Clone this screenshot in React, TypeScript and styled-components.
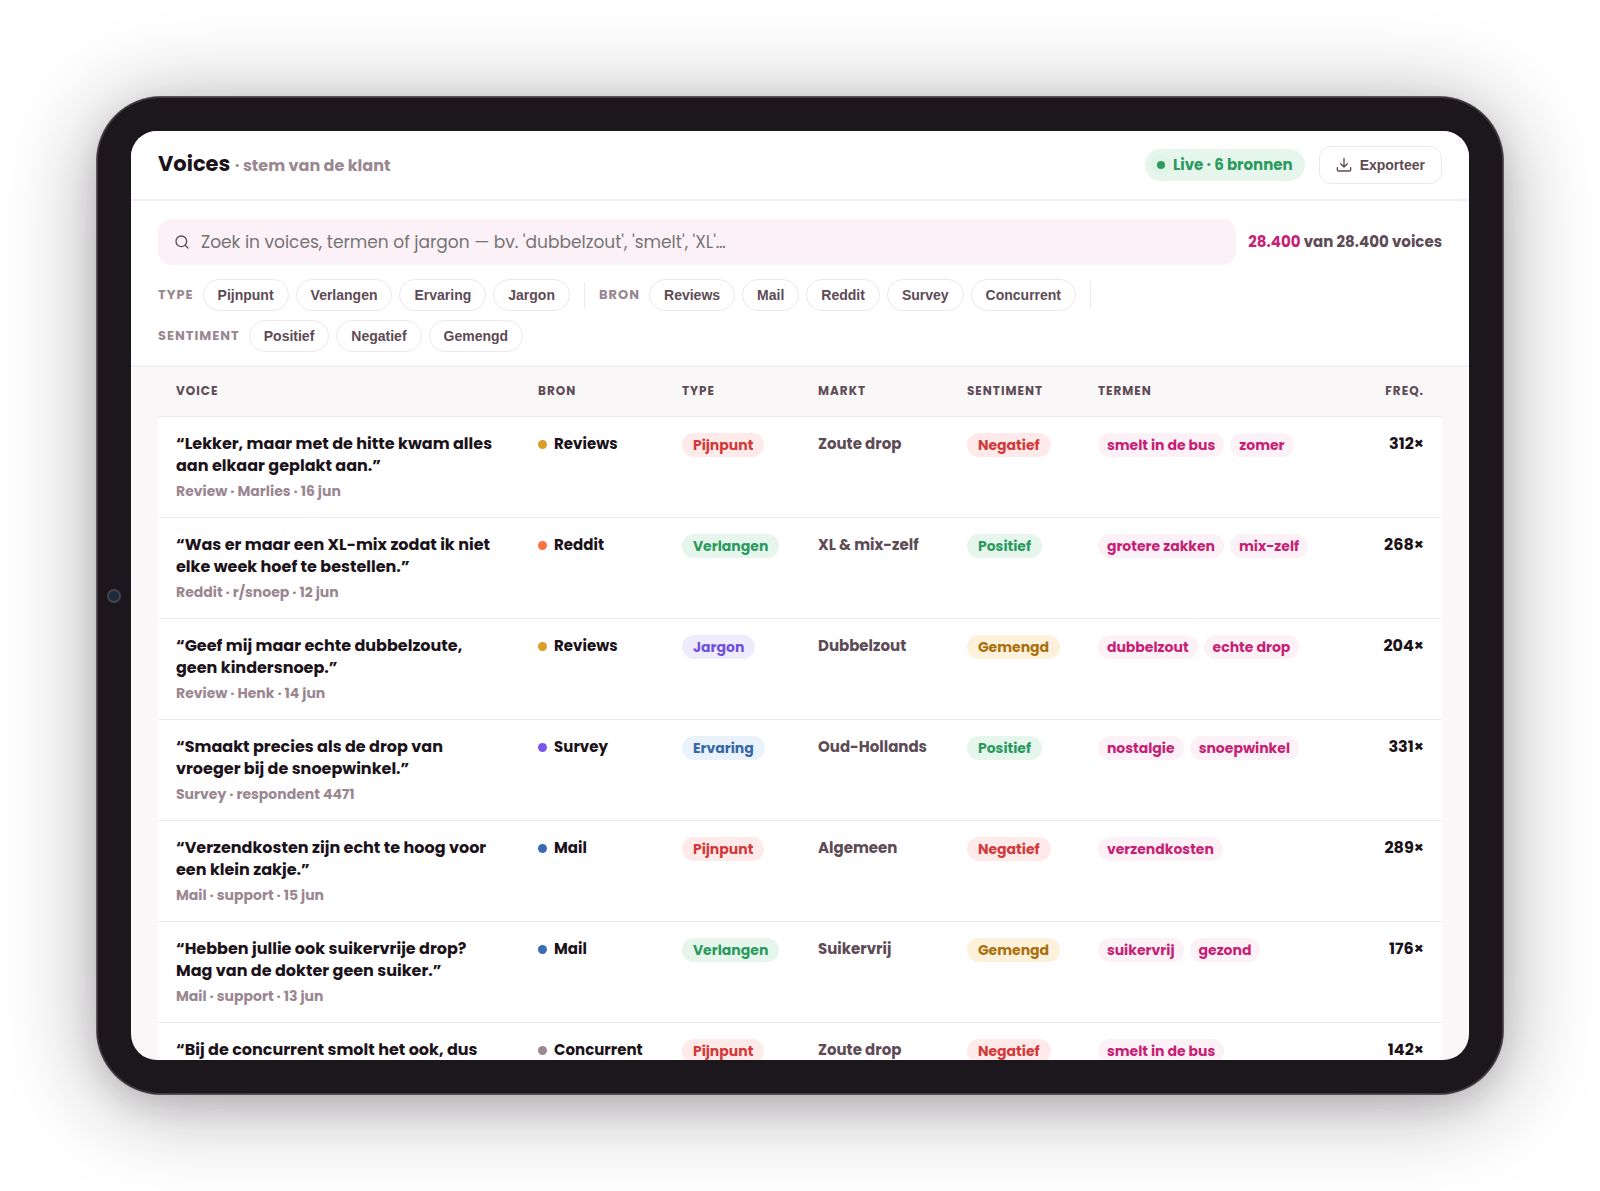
import React from "react";
import styled, { createGlobalStyle } from "styled-components";

const display = `Poppins, Inter, "Open Sans", sans-serif`;
const control = `"Liberation Sans", Arial, sans-serif`;

const GlobalStyle = createGlobalStyle`
  *, *::before, *::after { box-sizing: border-box; }
  body { margin: 0; background: #ffffff; color: #1b121a; font-family: ${display}; }
`;

const Stage = styled.main`
  display: flex;
  height: 100vh;
  min-height: 640px;
  padding: 97px;
  overflow: hidden;
`;

const Device = styled.div`
  position: relative;
  flex: 1;
  display: flex;
  min-width: 0;
  padding: 34px;
  border-radius: 64px;
  background: #1c161d;
  box-shadow: inset 0 0 0 1px #40373f, 0 0 0 1px #5c525a, 0 12px 28px rgba(28, 22, 29, 0.1), 0 10px 90px rgba(28, 22, 29, 0.38);
`;

const Camera = styled.span`
  position: absolute;
  top: 50%;
  left: 10px;
  width: 14px;
  height: 14px;
  margin-top: -7px;
  border: 2px solid #45424a;
  border-radius: 50%;
  background: #1c2b3c;
`;

const Screen = styled.div`
  flex: 1;
  display: flex;
  flex-direction: column;
  min-width: 0;
  overflow: hidden;
  border-radius: 26px;
  background: #f9f7f8;
`;

const TopBar = styled.header`
  display: flex;
  flex-shrink: 0;
  align-items: center;
  justify-content: space-between;
  padding: 15px 27px;
  border-bottom: 2px solid #f4eff2;
  background: #ffffff;
`;

const Title = styled.h1`
  margin: 0;
  font-size: 21px;
  line-height: 32px;
  font-weight: 700;
`;

const Subtitle = styled.span`
  color: #9a8792;
  font-size: 16px;
  font-weight: 700;
`;

const Actions = styled.div`
  display: flex;
  align-items: center;
  gap: 14px;
`;

const LiveBadge = styled.span`
  display: flex;
  align-items: center;
  gap: 8px;
  padding: 6px 12px;
  border-radius: 16px;
  background: #e6f6ec;
  color: #2b9a5e;
  font-size: 15px;
  line-height: 20px;
  font-weight: 700;
`;

const LiveDot = styled.span`
  width: 8px;
  height: 8px;
  border-radius: 50%;
  background: #2b9a5e;
  box-shadow: 0 0 0 6px rgba(43, 154, 94, 0.03);
`;

const ExportButton = styled.button`
  display: flex;
  align-items: center;
  gap: 8px;
  height: 38px;
  padding: 0 16px;
  border: 1px solid #f2e4eb;
  border-radius: 12px;
  background: #ffffff;
  color: #5d4b56;
  font-family: ${control};
  font-size: 14px;
  font-weight: 700;
`;

const Filters = styled.section`
  display: flex;
  flex-shrink: 0;
  flex-direction: column;
  gap: 14px;
  padding: 18px 27px 13px;
  border-bottom: 2px solid #f4eff2;
  background: #ffffff;
`;

const SearchRow = styled.div`
  display: flex;
  align-items: center;
  gap: 12px;
`;

const SearchBox = styled.label`
  flex: 1;
  display: flex;
  align-items: center;
  gap: 11px;
  height: 46px;
  padding: 0 16px;
  border-radius: 14px;
  background: #fcf1f7;
  color: #5d4b56;
`;

const SearchInput = styled.input`
  flex: 1;
  min-width: 0;
  padding: 0;
  border: 0;
  outline: 0;
  background: transparent;
  color: #1b121a;
  font-family: ${display};
  font-size: 17px;
  line-height: 24px;
  &::placeholder { color: #757575; opacity: 1; }
`;

const Count = styled.p`
  margin: 0;
  color: #5d4b56;
  font-size: 15px;
  line-height: 20px;
  font-weight: 700;
`;

const CountHit = styled.b`
  color: #c71f75;
  font-weight: 700;
`;

const ChipRow = styled.div`
  display: flex;
  flex-wrap: wrap;
  align-items: center;
  gap: 9px 14px;
`;

const ChipGroup = styled.div`
  display: flex;
  align-items: center;
  gap: 7px;
`;

const GroupLabel = styled.span`
  padding-right: 2px;
  color: #9a8792;
  font-size: 13px;
  line-height: 18px;
  font-weight: 700;
  letter-spacing: 1px;
  text-transform: uppercase;
`;

const Chip = styled.button`
  height: 32px;
  padding: 0 14px;
  border: 1px solid #f2e4eb;
  border-radius: 16px;
  background: #ffffff;
  color: #5d4b56;
  font-family: ${control};
  font-size: 14px;
  font-weight: 700;
`;

const Divider = styled.span`
  width: 1px;
  height: 26px;
  background: #f1e6ec;
`;

const TableArea = styled.div`
  flex: 1;
  min-height: 0;
  overflow: hidden;
  padding: 0 27px;
`;

const Table = styled.table`
  width: 100%;
  border-collapse: separate;
  border-spacing: 0;
  table-layout: fixed;
`;

const Col = styled.col<{ $share: number }>`
  width: ${(p) => p.$share}%;
`;

const Th = styled.th<{ $end?: boolean }>`
  padding: 15px 18px 16px;
  border-bottom: 1px solid #f3e4ea;
  color: #5d4b56;
  font-size: 12px;
  line-height: 18px;
  font-weight: 700;
  letter-spacing: 1px;
  text-align: ${(p) => (p.$end ? "right" : "left")};
  text-transform: uppercase;
`;

const Td = styled.td<{ $end?: boolean }>`
  padding: 16px 18px;
  border-bottom: 1px solid #f1e6ea;
  background: #ffffff;
  text-align: ${(p) => (p.$end ? "right" : "left")};
  vertical-align: top;
  white-space: nowrap;
`;

const Quote = styled.p`
  margin: 0 0 4px;
  font-size: 16px;
  line-height: 22px;
  font-weight: 700;
  white-space: pre;
`;

const Meta = styled.p`
  margin: 0;
  color: #9a8792;
  font-size: 14px;
  line-height: 20px;
  font-weight: 700;
`;

const Source = styled.span`
  display: flex;
  align-items: center;
  gap: 7px;
  font-size: 15px;
  line-height: 22px;
  font-weight: 700;
`;

const SourceDot = styled.span<{ $color: string }>`
  width: 9px;
  height: 9px;
  border-radius: 50%;
  background: ${(p) => p.$color};
`;

const Pill = styled.span<{ $bg: string; $fg: string }>`
  display: block;
  width: fit-content;
  padding: 0 11px;
  border-radius: 12px;
  background: ${(p) => p.$bg};
  color: ${(p) => p.$fg};
  font-size: 14px;
  line-height: 24px;
  font-weight: 700;
`;

const Market = styled.span`
  display: block;
  color: #5d4b56;
  font-size: 15px;
  line-height: 22px;
  font-weight: 700;
`;

const Terms = styled.div`
  display: flex;
  gap: 6px;
`;

const Term = styled.span`
  padding: 0 9px;
  border-radius: 12px;
  background: #fcf1f7;
  color: #c71f75;
  font-size: 14px;
  line-height: 24px;
  font-weight: 700;
`;

const Freq = styled.span`
  display: block;
  font-size: 16px;
  line-height: 22px;
  font-weight: 700;
`;

const tones: Record<string, [string, string]> = {
  Pijnpunt: ["#fdeae9", "#d3393a"],
  Negatief: ["#fdeae9", "#d3393a"],
  Verlangen: ["#e6f6ec", "#2b9a5e"],
  Positief: ["#e6f6ec", "#2b9a5e"],
  Jargon: ["#efebfd", "#6f51dc"],
  Ervaring: ["#eaf2fb", "#3568a8"],
  Gemengd: ["#fdf1dc", "#a9700c"],
};

const sources: Record<string, string> = {
  Reviews: "#d99f26",
  Reddit: "#fb7141",
  Survey: "#7858e8",
  Mail: "#3a6cb2",
  Concurrent: "#9a8792",
};

const groups = [
  { label: "Type", options: ["Pijnpunt", "Verlangen", "Ervaring", "Jargon"] },
  { label: "Bron", options: ["Reviews", "Mail", "Reddit", "Survey", "Concurrent"] },
  { label: "Sentiment", options: ["Positief", "Negatief", "Gemengd"] },
];

const columns = [
  { label: "Voice", share: 28.2 },
  { label: "Bron", share: 11.2 },
  { label: "Type", share: 10.6 },
  { label: "Markt", share: 11.6 },
  { label: "Sentiment", share: 10.2 },
  { label: "Termen", share: 20.2 },
  { label: "Freq.", share: 8, end: true },
];

const voices = [
  { quote: "“Lekker, maar met de hitte kwam alles\naan elkaar geplakt aan.”", meta: "Review · Marlies · 16 jun", source: "Reviews", type: "Pijnpunt", market: "Zoute drop", mood: "Negatief", terms: ["smelt in de bus", "zomer"], freq: 312 },
  { quote: "“Was er maar een XL-mix zodat ik niet\nelke week hoef te bestellen.”", meta: "Reddit · r/snoep · 12 jun", source: "Reddit", type: "Verlangen", market: "XL & mix-zelf", mood: "Positief", terms: ["grotere zakken", "mix-zelf"], freq: 268 },
  { quote: "“Geef mij maar echte dubbelzoute,\ngeen kindersnoep.”", meta: "Review · Henk · 14 jun", source: "Reviews", type: "Jargon", market: "Dubbelzout", mood: "Gemengd", terms: ["dubbelzout", "echte drop"], freq: 204 },
  { quote: "“Smaakt precies als de drop van\nvroeger bij de snoepwinkel.”", meta: "Survey · respondent 4471", source: "Survey", type: "Ervaring", market: "Oud-Hollands", mood: "Positief", terms: ["nostalgie", "snoepwinkel"], freq: 331 },
  { quote: "“Verzendkosten zijn echt te hoog voor\neen klein zakje.”", meta: "Mail · support · 15 jun", source: "Mail", type: "Pijnpunt", market: "Algemeen", mood: "Negatief", terms: ["verzendkosten"], freq: 289 },
  { quote: "“Hebben jullie ook suikervrije drop?\nMag van de dokter geen suiker.”", meta: "Mail · support · 13 jun", source: "Mail", type: "Verlangen", market: "Suikervrij", mood: "Gemengd", terms: ["suikervrij", "gezond"], freq: 176 },
  { quote: "“Bij de concurrent smolt het ook, dus", meta: "", source: "Concurrent", type: "Pijnpunt", market: "Zoute drop", mood: "Negatief", terms: ["smelt in de bus"], freq: 142 },
];

const SearchIcon = () => (
  <svg width="16" height="16" viewBox="0 0 24 24" fill="none" stroke="currentColor" strokeWidth="2" strokeLinecap="round" aria-hidden="true">
    <circle cx="11" cy="11" r="8" />
    <path d="m21 21-4.3-4.3" />
  </svg>
);

const DownloadIcon = () => (
  <svg width="16" height="16" viewBox="0 0 24 24" fill="none" stroke="currentColor" strokeWidth="2" strokeLinecap="round" strokeLinejoin="round" aria-hidden="true">
    <path d="M12 2v13M7 10l5 5 5-5M2 16v3a2 2 0 0 0 2 2h16a2 2 0 0 0 2-2v-3" />
  </svg>
);

const Tone = ({ name }: { name: string }) => (
  <Pill $bg={tones[name][0]} $fg={tones[name][1]}>{name}</Pill>
);

export default function App() {
  return (
    <>
      <GlobalStyle />
      <Stage>
        <Device>
          <Camera />
          <Screen>
            <TopBar>
              <Title>Voices <Subtitle>· stem van de klant</Subtitle></Title>
              <Actions>
                <LiveBadge><LiveDot />Live · 6 bronnen</LiveBadge>
                <ExportButton type="button"><DownloadIcon />Exporteer</ExportButton>
              </Actions>
            </TopBar>
            <Filters>
              <SearchRow>
                <SearchBox>
                  <SearchIcon />
                  <SearchInput type="text" placeholder="Zoek in voices, termen of jargon — bv. 'dubbelzout', 'smelt', 'XL'…" />
                </SearchBox>
                <Count><CountHit>28.400</CountHit> van 28.400 voices</Count>
              </SearchRow>
              <ChipRow>
                {groups.map((group, i) => (
                  <React.Fragment key={group.label}>
                    {i > 0 && <Divider />}
                    <ChipGroup>
                      <GroupLabel>{group.label}</GroupLabel>
                      {group.options.map((option) => <Chip key={option} type="button">{option}</Chip>)}
                    </ChipGroup>
                  </React.Fragment>
                ))}
              </ChipRow>
            </Filters>
            <TableArea>
              <Table>
                <colgroup>
                  {columns.map((c) => <Col key={c.label} $share={c.share} />)}
                </colgroup>
                <thead>
                  <tr>{columns.map((c) => <Th key={c.label} $end={c.end}>{c.label}</Th>)}</tr>
                </thead>
                <tbody>
                  {voices.map((v) => (
                    <tr key={v.quote}>
                      <Td><Quote>{v.quote}</Quote><Meta>{v.meta}</Meta></Td>
                      <Td><Source><SourceDot $color={sources[v.source]} />{v.source}</Source></Td>
                      <Td><Tone name={v.type} /></Td>
                      <Td><Market>{v.market}</Market></Td>
                      <Td><Tone name={v.mood} /></Td>
                      <Td><Terms>{v.terms.map((t) => <Term key={t}>{t}</Term>)}</Terms></Td>
                      <Td $end><Freq>{v.freq}×</Freq></Td>
                    </tr>
                  ))}
                </tbody>
              </Table>
            </TableArea>
          </Screen>
        </Device>
      </Stage>
    </>
  );
}
